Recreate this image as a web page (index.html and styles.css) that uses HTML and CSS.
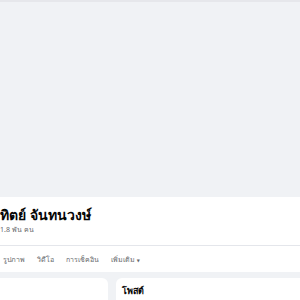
FILE: index.html
```html
<!DOCTYPE html>
<html lang="th">
<head>
<meta charset="utf-8">
<link rel="stylesheet" href="styles.css">
</head>
<body>
<div class="topbar"></div>
<div class="cover"></div>
<div class="header">
  <div class="info">
    <h1 class="name">ทิตย์ จันทนวงษ์</h1>
    <div class="sub">1.8 พัน คน</div>
  </div>
  <nav class="tabs">
    <span class="tab">รูปภาพ</span>
    <span class="tab">วิดีโอ</span>
    <span class="tab">การเช็คอิน</span>
    <span class="tab">เพิ่มเติม <span class="caret">▼</span></span>
  </nav>
</div>
<div class="content">
  <div class="card left"></div>
  <div class="card right"><div class="card-title">โพสต์</div></div>
</div>
</body>
</html>
```
FILE: styles.css
```css
html, body {
  margin: 0;
  padding: 0;
  background: #f0f2f5;
  font-family: "Noto Sans", "DejaVu Sans", sans-serif;
  overflow: hidden;
}
.topbar {
  height: 2px;
  background: #e6e7eb;
}
.cover {
  height: 195px;
  background: #f0f2f5;
}
.header {
  background: #fff;
}
.info {
  height: 48px;
  border-bottom: 1px solid #e4e6eb;
}
.name {
  margin: 0;
  padding-top: 8px;
  font-size: 14px;
  line-height: 19px;
  font-weight: 700;
  color: #050505;
}
.sub {
  font-size: 7px;
  line-height: 10px;
  color: #65676b;
  margin-top: 1px;
}
.tabs {
  display: flex;
  gap: 12px;
  height: 26px;
  align-items: center;
  padding-left: 3px;
  font-size: 7px;
  color: #65676b;
}
.caret {
  font-size: 4px;
  vertical-align: middle;
}
.content {
  display: flex;
  gap: 8px;
  padding-top: 6px;
}
.card {
  background: #fff;
  height: 22px;
  border-radius: 6px 6px 0 0;
}
.left {
  width: 116px;
  margin-left: -8px;
  flex: none;
}
.right {
  flex: 1;
  margin-right: -8px;
  padding: 7px 6px 0;
  height: 15px;
}
.card-title {
  font-size: 9px;
  line-height: 11px;
  font-weight: 700;
  color: #050505;
}
```
